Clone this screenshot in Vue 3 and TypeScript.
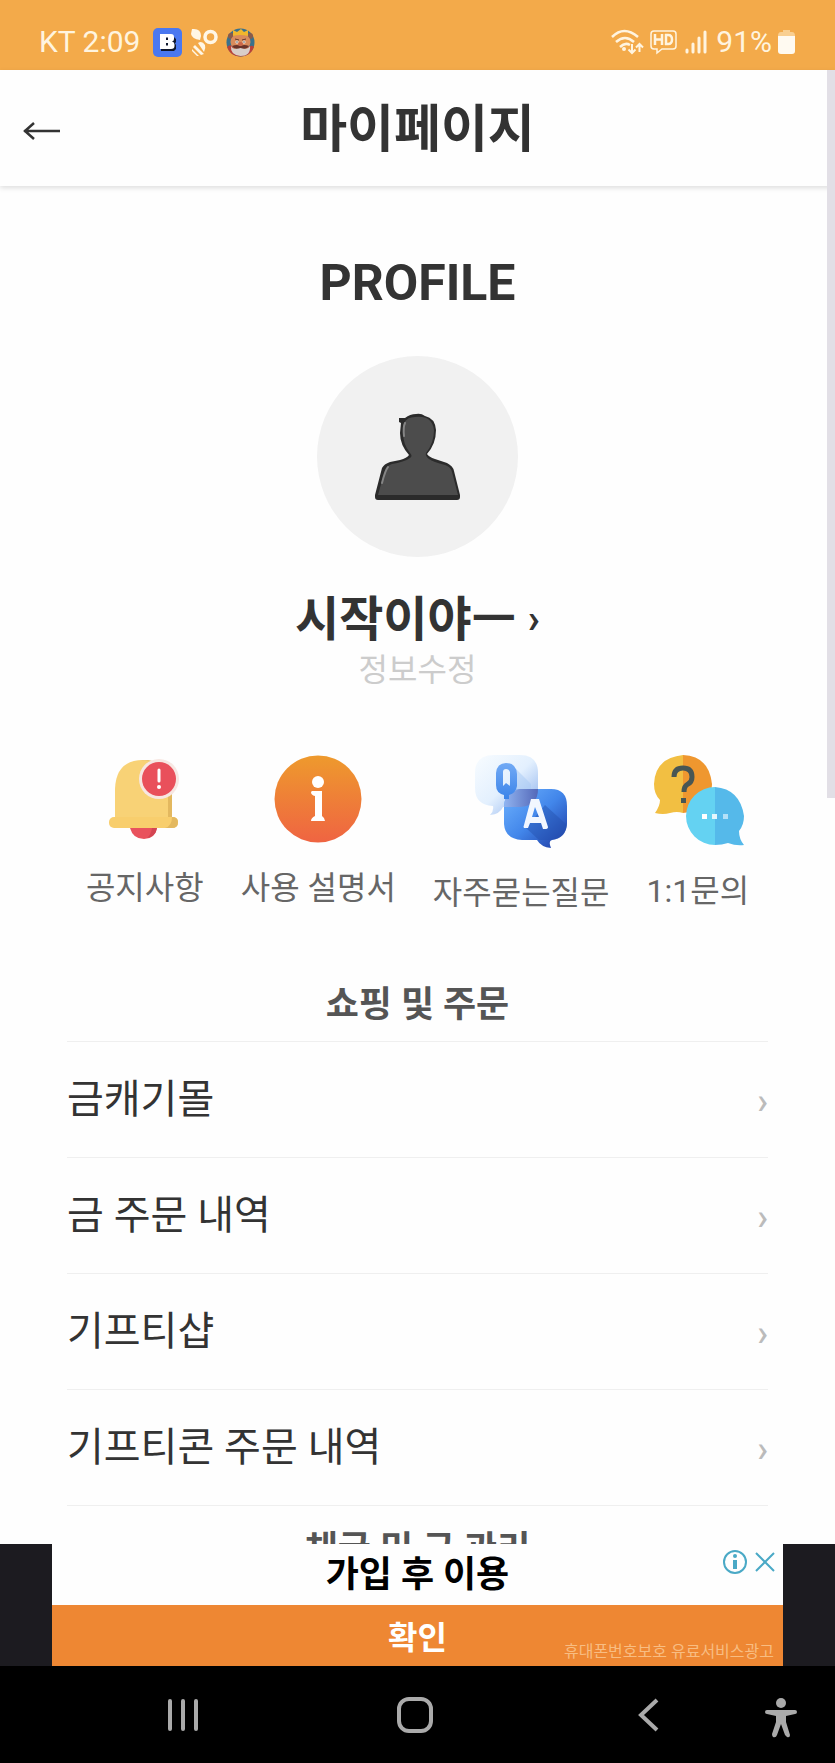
<script setup lang="ts">
interface MenuItem {
  label: string
}

const menuItems: MenuItem[] = [
  { label: '금캐기몰' },
  { label: '금 주문 내역' },
  { label: '기프티샵' },
  { label: '기프티콘 주문 내역' },
]
</script>

<template>
  <div class="phone">
    <div class="status">
      <div class="status-side">
        <span>KT 2:09</span>
        <svg class="app-icon" width="29" height="29" viewBox="0 0 29 29" aria-hidden="true">
          <rect width="29" height="29" rx="5" fill="#4a78f0" />
          <path d="M8 8H20L23 11V14L22 15.500L23 17V21L21 23H8Z" fill="#10182e" />
          <path fill-rule="evenodd" d="M7 6H18Q21 6 21 9V11Q21 13 19 13.500Q21.500 14 21.500 16.500V18Q21.500 21 18 21H7ZM13 9.500V12H15V9.500ZM13 15V17.500H15V15Z" fill="#fff" />
        </svg>
        <svg class="app-icon" width="28" height="29" viewBox="0 0 28 29" aria-hidden="true">
          <circle cx="20.500" cy="9" r="5.500" fill="none" stroke="#fff7e6" stroke-width="3.500" />
          <path d="M2 1Q11 0 11 8L10 12Q2 11 1 6Z" fill="#fff7e6" />
          <path d="M8 15Q12 12 15 17Q16 20 14 24Z M5 17L14 26L11 27L3 19Z M2 21L9 28H7L2 23Z" fill="#fff7e6" />
        </svg>
        <svg class="app-icon" width="29" height="29" viewBox="0 0 29 29" aria-hidden="true">
          <circle cx="14.500" cy="14.500" r="14" fill="#39718c" />
          <path d="M1 19Q5 15 8 20L21 20Q26 16 28 19Q25 28 14.500 28.500Q4 28 1 19Z" fill="#ba4138" />
          <circle cx="5" cy="8" r="3" fill="#895b4a" /><circle cx="24" cy="8" r="3" fill="#895b4a" />
          <ellipse cx="14.500" cy="14" rx="10" ry="9" fill="#d98b5b" />
          <path d="M5 18Q8 24 14 18Q20 24 24 18Q25 28 14.500 28Q4 27 5 18Z" fill="#d9cec8" />
          <path d="M6 18Q11 16 14.500 18Q18 16 23 18Q21 22 14.500 20Q8 22 6 18Z" fill="#6a3329" />
          <path d="M7 8L7 2L11 4L15 1L18 4L22 2L22 8Q14 6 7 8Z" fill="#f1b72d" />
          <path d="M9 11L13 12M16 12L20 11" stroke="#63382f" stroke-width="1" />
          <circle cx="11" cy="14" r="1.500" fill="#fff" /><circle cx="18" cy="14" r="1.500" fill="#fff" />
          <circle cx="11" cy="14" r=".7" fill="#222" /><circle cx="18" cy="14" r=".7" fill="#222" />
          <ellipse cx="14.500" cy="16" rx="2.500" ry="2" fill="#c96549" />
        </svg>
      </div>
      <div class="status-side right">
        <svg width="34" height="28" viewBox="0 0 34 28" fill="none" stroke="#fff4df" stroke-width="2.500" aria-hidden="true">
          <path d="M2 9Q14 -3 28 9M6 14Q15 6 24 14M10 19Q15 14 20 17" />
          <circle cx="14" cy="21" r="2" fill="#fff4df" stroke="none" />
          <path d="M22 16V25M18.500 21.500L22 25L25.500 21.500M29.500 24V16M26 19.500L29.500 16L33 19.500" stroke-width="2" />
        </svg>
        <svg width="28" height="26" viewBox="0 0 28 26" fill="none" stroke="#fff4df" aria-hidden="true">
          <path d="M4 2H23Q26 2 26 5V17Q26 20 23 20H12L7 24V20H4Q1 20 1 17V5Q1 2 4 2Z" stroke-width="1.500" />
          <path d="M5 5V16M12 5V16M5 10.500H12M16 5V16M15 6H18Q22 6 22 10.500T18 15H15" stroke-width="2.500" />
        </svg>
        <svg width="24" height="26" viewBox="0 0 24 26" fill="none" stroke="#fff4df" stroke-width="3" stroke-linecap="round" aria-hidden="true">
          <path d="M3 21V23M9 15V23M15 9V23" /><path d="M21 3V23" />
        </svg>
        <span class="battery-level">91%</span>
        <svg width="17" height="26" viewBox="0 0 17 26" aria-hidden="true">
          <path d="M5 1H12V3H14Q17 3 17 7H0Q0 3 3 3H5Z" fill="#f9cf91" />
          <path d="M0 7H17V22Q17 25 14 25H3Q0 25 0 22Z" fill="#fffaf1" />
        </svg>
      </div>
    </div>

    <div class="screen">
      <header class="header">
        <button class="back" type="button" aria-label="뒤로">
          <svg width="40" height="20" viewBox="0 0 40 20" fill="none" stroke="#333" stroke-width="2.500">
            <path d="M39 10H3M13 2L4 10L13 18" />
          </svg>
        </button>
        <h1>마이페이지</h1>
      </header>

      <main class="content">
        <section class="profile">
          <h2>PROFILE</h2>
          <div class="avatar">
            <svg width="86" height="88" viewBox="0 0 86 88" aria-hidden="true">
              <path d="M26 10L24 9V5L30 5Q35 1 41 1Q46 0 50 3Q60 5 61 17Q61 31 52 41Q54 44 60 46L72 50Q78 53 79 58L85 82V84Q85 87 82 87H3Q0 87 0 84V82L7 55Q9 51 15 49L25 47Q32 45 34 42Q25 32 25 20Z" fill="#2b2b2b" />
              <path d="M29 10Q32 4 40 4Q57 2 59 17Q59 30 51 40Q50 43 54 46Q58 49 70 52Q76 54 77 59L83 82H3L10 57Q11 53 17 51Q29 49 35 45Q38 43 35 40Q28 31 28 20Z" fill="#4c4c4c" />
              <path d="M30 10Q28 14 29 23M13 54Q10 58 7 70" fill="none" stroke="#858585" stroke-width="2" stroke-linecap="round" />
            </svg>
          </div>
          <a class="name" href="#"><span>시작이야ㅡ</span><span class="name-arrow">›</span></a>
          <a class="edit" href="#">정보수정</a>
        </section>

        <nav class="shortcuts" aria-label="고객 지원">
          <a href="#">
            <svg width="88" height="88" viewBox="2 0 88 88" aria-hidden="true">
              <path d="M31 73H58Q56 84 45 84Q34 84 31 73Z" fill="#e9525d" />
              <path d="M48 83Q57 81 58 73H53Q52 80 48 83Z" fill="#d34552" />
              <path d="M16 65V34Q17 5 44 5Q71 5 73 34V65Z" fill="#f8d276" />
              <path d="M37 5Q66 3 69 34V65H73V32Q70 5 44 5Z" fill="#e3b85f" />
              <rect x="10" y="62" width="69" height="11" rx="5" fill="#f8ce6d" />
              <path d="M73 62Q79 62 79 67Q79 73 73 73H66Q73 71 73 62Z" fill="#e3b85f" />
              <circle cx="60" cy="24" r="20" fill="#f7e7e2" /><circle cx="60" cy="24" r="17" fill="#e9505b" />
              <path d="M60 15V26" stroke="#fff" stroke-width="3" stroke-linecap="round" /><circle cx="60" cy="32" r="2" fill="#fff" />
            </svg>
            <span>공지사항</span>
          </a>
          <a href="#">
            <svg width="88" height="88" viewBox="0 0 88 88" aria-hidden="true">
              <defs><linearGradient id="info" x2="0" y2="1"><stop stop-color="#ee9a2d" /><stop offset="1" stop-color="#ef6442" /></linearGradient></defs>
              <circle cx="44" cy="44" r="43.500" fill="url(#info)" />
              <circle cx="44" cy="27" r="6" fill="#fff" />
              <path d="M38 36H48V61Q51 63 51 66H37Q37 63 41 61V41Q37 40 37 37Z" fill="#fff" />
            </svg>
            <span>사용 설명서</span>
          </a>
          <a href="#">
            <svg width="94" height="93" viewBox="0 0 94 93" aria-hidden="true">
              <defs>
                <linearGradient id="answer" x1="0" y1="0" x2="1" y2="1"><stop stop-color="#70b4ff" /><stop offset=".5" stop-color="#4286ea" /><stop offset="1" stop-color="#1c37a0" /></linearGradient>
                <linearGradient id="question" x1="0" y1="0" x2="1" y2="1"><stop stop-color="#f8fcff" /><stop offset=".5" stop-color="#e3f0fe" /><stop offset="1" stop-color="#82a9ea" /></linearGradient>
                <linearGradient id="letter" x2="0" y2="1"><stop stop-color="#72aaf5" /><stop offset="1" stop-color="#3b84e9" /></linearGradient>
                <linearGradient id="overlap" x2="1"><stop stop-color="#91b4f0" /><stop offset="1" stop-color="#5368b9" /></linearGradient>
              </defs>
              <path d="M20 0H46Q64 0 64 18V33Q64 51 46 52H29Q26 59 16 60Q20 56 19 51Q1 50 1 33V18Q1 0 20 0Z" fill="url(#question)" />
              <path d="M47 34H77Q93 34 93 51V69Q92 83 78 85Q74 86 77 93Q67 92 63 85H48Q31 84 30 69V51Q31 34 47 34Z" fill="url(#answer)" />
              <path d="M47 34H64Q64 51 46 52H30Q31 34 47 34Z" fill="url(#overlap)" />
              <path d="M40 12L57 29V34H45L33 40Z" fill="#a8c9f3" opacity=".5" />
              <path d="M71 50L93 70Q91 84 77 85H65L52 73Z" fill="#244fae" opacity=".45" />
              <path fill-rule="evenodd" d="M32 8Q42 8 43 19V31Q42 38 35 40V44H30V40Q22 38 22 30V18Q23 8 32 8ZM29 17V31L32 28L36 31V17Q35 14 32 14Q29 14 29 17Z" fill="url(#letter)" />
              <path fill-rule="evenodd" d="M57 44H65L74 72Q74 74 71 74H69L67 68H56L54 73H50Q49 72 50 70ZM61 52L58 62H65Z" fill="#f2f7ff" />
            </svg>
            <span>자주묻는질문</span>
          </a>
          <a href="#">
            <svg width="92" height="91" viewBox="0 0 92 91" aria-hidden="true">
              <path d="M31 58Q25 56 18 58Q11 60 3 58Q8 51 8 45Q2 39 2 29Q3 3 31 0Z" fill="#f2bf42" />
              <path d="M31 0Q57 1 60 29Q60 55 31 58Z" fill="#ef972f" />
              <path d="M22 22Q22 13 31 13Q40 13 40 22Q40 27 36 29Q32 31 32 37" fill="none" stroke="#485654" stroke-width="5" />
              <rect x="29" y="43" width="5" height="5" fill="#485654" />
              <path d="M63 32A29 29 0 0 0 63 90Z" fill="#64d2f2" />
              <path d="M63 32Q88 34 92 61Q92 70 87 76Q87 84 92 90Q84 91 76 88Q70 90 63 90Z" fill="#55b9ea" />
              <path d="M50 59H55V64H50Z" fill="#fff" /><path d="M60 59H65V64H60Z" fill="#e4f6fd" /><path d="M71 59H76V64H71Z" fill="#b3e0f8" />
            </svg>
            <span>1:1문의</span>
          </a>
        </nav>

        <section class="menu">
          <h3>쇼핑 및 주문</h3>
          <ul>
            <li v-for="item in menuItems" :key="item.label">
              <a href="#"><span>{{ item.label }}</span><span class="arrow">›</span></a>
            </li>
          </ul>
        </section>
        <section class="menu next">
          <h3>채굴 및 금 관리</h3>
        </section>
      </main>
      <div class="scroll-thumb"></div>
    </div>

    <aside class="ad">
      <div class="ad-body">
        <div class="ad-head">
          <strong>가입 후 이용</strong>
          <div class="ad-tools">
            <button type="button" aria-label="광고 정보">
              <svg width="26" height="26" viewBox="0 0 26 26" fill="none" stroke="#4aa9c6" stroke-width="2">
                <circle cx="13" cy="13" r="11" /><circle cx="13" cy="7" r="2" fill="#4aa9c6" stroke="none" /><path d="M13 11V20" stroke-width="4" />
              </svg>
            </button>
            <button type="button" aria-label="광고 닫기">
              <svg width="20" height="20" viewBox="0 0 20 20" stroke="#4aa9c6" stroke-width="2"><path d="M1 1L19 19M19 1L1 19" /></svg>
            </button>
          </div>
        </div>
        <div class="ad-action">
          <button type="button">확인</button>
          <small>휴대폰번호보호 유료서비스광고</small>
        </div>
      </div>
    </aside>

    <nav class="system" aria-label="시스템">
      <button type="button" aria-label="최근 앱">
        <svg width="32" height="36" viewBox="0 0 32 36" stroke="#aaa" stroke-width="4" stroke-linecap="round"><path d="M3 4V32M16 4V32M29 4V32" /></svg>
      </button>
      <button type="button" aria-label="홈">
        <svg width="36" height="36" viewBox="0 0 36 36" fill="none" stroke="#aaa" stroke-width="4"><rect x="2" y="2" width="32" height="32" rx="10" /></svg>
      </button>
      <button type="button" aria-label="이전">
        <svg width="22" height="36" viewBox="0 0 22 36" fill="none" stroke="#aaa" stroke-width="4"><path d="M20 3L4 18L20 33" /></svg>
      </button>
      <button class="access" type="button" aria-label="접근성">
        <svg width="32" height="40" viewBox="0 0 32 40" fill="#aaa">
          <circle cx="16" cy="5" r="5" />
          <path d="M2 12H30Q32 12 32 14Q32 16 30 16L21 18V24L25 37Q25 40 22 39L20 37L16 26L12 37Q11 40 8 39Q7 38 7 36L11 24V18L2 16Q0 16 0 14Q0 12 2 12Z" />
        </svg>
      </button>
    </nav>
  </div>
</template>

<style>
body {
  margin: 0;
}
</style>

<style scoped>
* {
  box-sizing: border-box;
}

.phone {
  display: flex;
  flex-direction: column;
  height: 100vh;
  background: #fefefe;
  color: #333;
  font-family: Roboto, "Noto Sans CJK KR", sans-serif;
}

button {
  display: flex;
  padding: 0;
  border: 0;
  background: none;
  color: inherit;
  font: inherit;
}

a {
  color: inherit;
  text-decoration: none;
}

h1,
h2,
h3,
ul {
  margin: 0;
  padding: 0;
}

svg {
  flex: none;
}

.status {
  display: flex;
  flex: none;
  justify-content: space-between;
  height: 70px;
  padding: 14px 40px 0 39px;
  background: #f3aa4a;
  color: #fff4df;
  font-size: 30px;
}

.status-side {
  display: flex;
  align-items: center;
  gap: 8px;
}

.status-side > span {
  line-height: 56px;
}

.status-side > span:first-child {
  margin-right: 5px;
}

.right {
  gap: 6px;
}

.battery-level {
  margin-left: 2px;
}

.screen {
  position: relative;
  display: flex;
  flex: 1;
  flex-direction: column;
  min-height: 0;
}

.header {
  position: relative;
  z-index: 1;
  display: flex;
  flex: none;
  align-items: center;
  justify-content: center;
  height: 116px;
  padding-top: 4px;
  background: #fefefe;
  box-shadow: 0 2px 5px rgba(0, 0, 0, 0.13);
}

.back {
  position: absolute;
  left: 21px;
  top: 51px;
}

h1 {
  font-size: 51px;
  line-height: 76px;
}

.content {
  flex: 1;
  min-height: 0;
  overflow: hidden;
}

.scroll-thumb {
  position: absolute;
  z-index: 2;
  top: 0;
  right: 0;
  width: 8px;
  height: 728px;
  background: #e2dfe6;
}

.profile {
  display: flex;
  flex-direction: column;
  align-items: center;
  padding-top: 67px;
}

h2 {
  font-size: 50px;
  line-height: 60px;
}

.avatar {
  display: flex;
  align-items: center;
  justify-content: center;
  width: 201px;
  height: 201px;
  margin-top: 43px;
  border-radius: 50%;
  background: #f1f1f1;
}

.name {
  display: flex;
  align-items: center;
  gap: 12px;
  margin-top: 27px;
  font-size: 48px;
  font-weight: 700;
  line-height: 72px;
}

.name-arrow {
  font-size: 40px;
}

.edit {
  color: #ccc;
  font-size: 32px;
  line-height: 28px;
}

.shortcuts {
  display: flex;
  align-items: flex-start;
  justify-content: center;
  gap: 37px;
  margin-top: 71px;
  color: #666;
  font-size: 32px;
  line-height: 48px;
}

.shortcuts a {
  display: flex;
  flex-direction: column;
  align-items: center;
  gap: 21px;
}

.menu {
  padding: 0 67px;
  margin-top: 52px;
}

.next {
  margin-top: 8px;
}

h3 {
  color: #555;
  font-size: 36px;
  line-height: 72px;
  text-align: center;
}

ul {
  border-top: 1px solid #efefef;
  list-style: none;
}

li a {
  display: flex;
  align-items: center;
  justify-content: space-between;
  height: 116px;
  border-bottom: 1px solid #efefef;
  font-size: 40px;
  line-height: 60px;
}

.arrow {
  padding-top: 4px;
  color: #bbb;
  font-size: 36px;
  font-weight: 500;
}

.ad {
  flex: none;
  padding: 0 52px;
  background: #1c1b20;
}

.ad-body {
  background: #fefefe;
}

.ad-head,
.ad-action {
  position: relative;
  display: flex;
  align-items: center;
  justify-content: center;
  height: 61px;
}

.ad-head strong {
  color: #000;
  font-size: 36px;
  line-height: 48px;
}

.ad-tools {
  position: absolute;
  top: 5px;
  right: 8px;
  display: flex;
  align-items: center;
  gap: 7px;
}

.ad-action {
  background: #ee8733;
  color: #fff;
}

.ad-action button {
  padding-bottom: 2px;
  font-size: 32px;
  font-weight: 700;
}

.ad-action small {
  position: absolute;
  right: 9px;
  bottom: 4px;
  color: #f8bd82;
  font-size: 16px;
}

.system {
  position: relative;
  display: grid;
  flex: none;
  grid-template-columns: repeat(3, 28%);
  align-items: center;
  justify-content: center;
  justify-items: center;
  height: 97px;
  padding-right: 4px;
  background: #000;
}

.access {
  position: absolute;
  top: 32px;
  right: 38px;
}
</style>
